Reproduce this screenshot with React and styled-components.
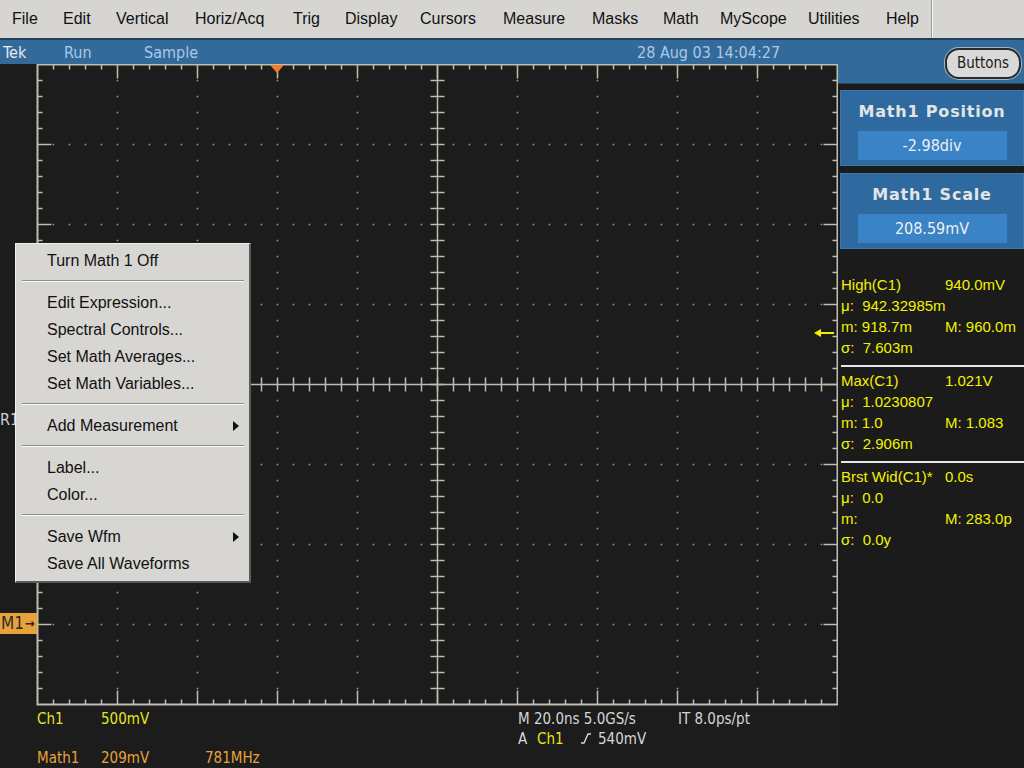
import React from 'react'
import styled, { createGlobalStyle } from 'styled-components'

const GlobalStyle = createGlobalStyle`
    html, body {
        margin: 0;
        padding: 0;
        background: #1c1c1c;
    }
`

const scopeFont = `"DejaVu Sans Condensed", "Liberation Sans Narrow", "DejaVu Sans", sans-serif`
const winFont = `"Liberation Sans", Arial, sans-serif`

const MENU = [
    ['File', 63], ['Edit', 53], ['Vertical', 79], ['Horiz/Acq', 98], ['Trig', 52],
    ['Display', 75], ['Cursors', 83], ['Measure', 89], ['Masks', 71], ['Math', 57],
    ['MyScope', 88], ['Utilities', 78], ['Help', 45],
]

const POPUP = [
    [{ text: 'Turn Math 1 Off' }],
    [{ text: 'Edit Expression...' }, { text: 'Spectral Controls...' }, { text: 'Set Math Averages...' }, { text: 'Set Math Variables...' }],
    [{ text: 'Add Measurement', sub: true }],
    [{ text: 'Label...' }, { text: 'Color...' }],
    [{ text: 'Save Wfm', sub: true }, { text: 'Save All Waveforms' }],
]

const MEASUREMENTS = [
    { name: 'High(C1)', value: '940.0mV', mean: '942.32985m', min: '918.7m', max: '960.0m', sd: '7.603m' },
    { name: 'Max(C1)', value: '1.021V', mean: '1.0230807', min: '1.0', max: '1.083', sd: '2.906m' },
    { name: 'Brst Wid(C1)*', value: '0.0s', mean: '0.0', min: '', max: '283.0p', sd: '0.0y' },
]

function Graticule() {
    const x0 = 37.5
    const y0 = 0.5
    const els = []
    const c = '#bdbdb0'
    // dots on major lines
    for (let i = 1; i < 10; i++) {
        if (i === 5) continue
        for (let j = 1; j < 40; j++) {
            els.push(<rect key={`dv${i}-${j}`} x={x0 + i * 80 - 0.75} y={y0 + j * 16 - 0.75} width="1.5" height="1.5" fill="#9d9d94" />)
        }
    }
    for (let k = 1; k < 8; k++) {
        if (k === 4) continue
        for (let j = 1; j < 50; j++) {
            if (j % 5 === 0) continue
            els.push(<rect key={`dh${k}-${j}`} x={x0 + j * 16 - 0.75} y={y0 + k * 80 - 0.75} width="1.5" height="1.5" fill="#9d9d94" />)
        }
    }
    // edge ticks
    for (let j = 1; j < 50; j++) {
        const x = x0 + j * 16
        const l = j % 5 === 0 ? 14 : 5
        els.push(<line key={`tt${j}`} x1={x} y1={y0} x2={x} y2={y0 + l} stroke={c} strokeWidth="1.5" />)
        els.push(<line key={`tb${j}`} x1={x} y1={y0 + 640} x2={x} y2={y0 + 640 - l} stroke={c} strokeWidth="1.5" />)
        els.push(<line key={`tc${j}`} x1={x} y1={y0 + 313} x2={x} y2={y0 + 327} stroke={c} strokeWidth="1.5" />)
    }
    for (let j = 1; j < 40; j++) {
        const y = y0 + j * 16
        const l = j % 5 === 0 ? 14 : 5
        els.push(<line key={`tl${j}`} x1={x0} y1={y} x2={x0 + l} y2={y} stroke={c} strokeWidth="1.5" />)
        els.push(<line key={`tr${j}`} x1={x0 + 800} y1={y} x2={x0 + 800 - l} y2={y} stroke={c} strokeWidth="1.5" />)
        els.push(<line key={`tm${j}`} x1={x0 + 393} y1={y} x2={x0 + 407} y2={y} stroke={c} strokeWidth="1.5" />)
    }
    return (
        <svg width="838" height="642" viewBox="0 0 838 642">
            {els}
            <line x1={x0 + 400} y1={y0} x2={x0 + 400} y2={y0 + 640} stroke={c} strokeWidth="1.5" />
            <line x1={x0} y1={y0 + 320} x2={x0 + 800} y2={y0 + 320} stroke={c} strokeWidth="1.5" />
            <rect x={x0} y={y0} width="800" height="640" fill="none" stroke={c} strokeWidth="2" />
            <polygon points="270,1 284,1 277,9" fill="#f27a2a" />
            <line x1="817" y1="269" x2="834" y2="269" stroke="#f2f200" strokeWidth="2" />
            <polygon points="814,269 821,265 821,273" fill="#f2f200" />
        </svg>
    )
}

export default function App() {
    return (
        <Screen>
            <GlobalStyle />
            <MenuBar>
                {MENU.map(([t, w], i) => (
                    <MenuItem key={t} w={w} first={i === 0}>{t}</MenuItem>
                ))}
                <MenuDivider />
            </MenuBar>
            <Body>
                <LeftCol>
                    <StatusBar>
                        <StatusText w={61} bright>Tek</StatusText>
                        <StatusText w={80}>Run</StatusText>
                        <StatusText w={493}>Sample</StatusText>
                        <StatusText>28 Aug 03 14:04:27</StatusText>
                    </StatusBar>
                    <ScopeArea>
                        <Graticule />
                        <RefLabel>R1</RefLabel>
                        <MathMarker>M1<MarkerArrow>→</MarkerArrow></MathMarker>
                        <PopupMenu>
                            {POPUP.map((group, gi) => (
                                <React.Fragment key={gi}>
                                    {gi > 0 && <PopupSeparator />}
                                    {group.map(item => (
                                        <PopupItem key={item.text}>
                                            {item.text}
                                            {item.sub && <SubArrow />}
                                        </PopupItem>
                                    ))}
                                </React.Fragment>
                            ))}
                        </PopupMenu>
                    </ScopeArea>
                    <Readouts>
                        <ReadoutBlock w={481}>
                            <ReadoutRow gap={21}>
                                <Cell w={64} color="#e4e41c">Ch1</Cell>
                                <Cell color="#e4e41c">500mV</Cell>
                            </ReadoutRow>
                            <ReadoutRow>
                                <Cell w={64} color="#e3a43a">Math1</Cell>
                                <Cell w={104} color="#e3a43a">209mV</Cell>
                                <Cell color="#e3a43a">781MHz</Cell>
                            </ReadoutRow>
                        </ReadoutBlock>
                        <ReadoutBlock>
                            <ReadoutRow gap={2}>
                                <Cell w={160}>M 20.0ns 5.0GS/s</Cell>
                                <Cell>IT 8.0ps/pt</Cell>
                            </ReadoutRow>
                            <ReadoutRow>
                                <Cell w={19}>A</Cell>
                                <Cell w={43} color="#e4e41c">Ch1</Cell>
                                <Cell w={18}>
                                    <svg width="12" height="12" viewBox="0 0 12 12">
                                        <path d="M1 11 L4 11 L8 2 L11 2" fill="none" stroke="#d8d8d8" strokeWidth="1.4" />
                                    </svg>
                                </Cell>
                                <Cell>540mV</Cell>
                            </ReadoutRow>
                        </ReadoutBlock>
                    </Readouts>
                </LeftCol>
                <RightCol>
                    <PanelTop>
                        <PillButton>Buttons</PillButton>
                    </PanelTop>
                    <ControlBoxes>
                        <ControlBox>
                            <ControlTitle>Math1 Position</ControlTitle>
                            <ControlValue>-2.98div</ControlValue>
                        </ControlBox>
                        <ControlBox>
                            <ControlTitle>Math1 Scale</ControlTitle>
                            <ControlValue>208.59mV</ControlValue>
                        </ControlBox>
                    </ControlBoxes>
                    <Measurements>
                        {MEASUREMENTS.map((m, i) => (
                            <MeasGroup key={m.name} first={i === 0}>
                                <MeasRow><span>{m.name}</span><span>{m.value}</span></MeasRow>
                                <MeasRow><Wide>μ:&nbsp; {m.mean}</Wide></MeasRow>
                                <MeasRow><span>m: {m.min}</span><span>M: {m.max}</span></MeasRow>
                                <MeasRow><span>σ:&nbsp; {m.sd}</span></MeasRow>
                            </MeasGroup>
                        ))}
                    </Measurements>
                </RightCol>
            </Body>
        </Screen>
    )
}

const Screen = styled.div`
    width: 1024px;
    height: 768px;
    overflow: hidden;
    display: flex;
    flex-direction: column;
    background: #1c1c1c;
`

const MenuBar = styled.div`
    height: 38px;
    background: #d6d5d2;
    border-bottom: 2px solid #1f3f5f;
    display: flex;
    align-items: center;
    font-family: ${winFont};
    font-size: 16px;
    color: #111;
`

const MenuItem = styled.div`
    width: ${props => props.w}px;
    padding-left: ${props => props.first ? 12 : 0}px;
    box-sizing: border-box;
    flex: none;
`

const MenuDivider = styled.div`
    align-self: stretch;
    width: 1px;
    background: #9c9c9c;
    border-right: 1px solid #f4f4f4;
`

const Body = styled.div`
    flex: 1;
    display: flex;
`

const LeftCol = styled.div`
    width: 838px;
    display: flex;
    flex-direction: column;
`

const StatusBar = styled.div`
    height: 24px;
    background: #336a99;
    display: flex;
    align-items: center;
    padding-left: 3px;
    font-family: ${scopeFont};
    font-size: 16px;
`

const StatusText = styled.div`
    width: ${props => props.w ? `${props.w}px` : 'auto'};
    flex: none;
    color: ${props => props.bright ? '#e4ecf4' : '#a9c9e9'};
`

const ScopeArea = styled.div`
    position: relative;
    height: 642px;
    svg { display: block; }
`

const RefLabel = styled.div`
    position: absolute;
    left: 0;
    top: 346px;
    font-family: ${scopeFont};
    font-size: 16px;
    color: #d0d0d0;
`

const MathMarker = styled.div`
    position: absolute;
    left: 0;
    top: 549px;
    width: 37px;
    height: 21px;
    background: #e7a33a;
    color: #2a2a2a;
    font-family: ${scopeFont};
    font-size: 17px;
    line-height: 21px;
    display: flex;
    align-items: center;
    padding-left: 1px;
    box-sizing: border-box;
    overflow: hidden;
`

const MarkerArrow = styled.span`
    font-size: 13px;
    margin-left: 1px;
    font-weight: bold;
`

const PopupMenu = styled.div`
    position: absolute;
    left: 15px;
    top: 179px;
    width: 236px;
    box-sizing: border-box;
    padding: 3px 0 4px;
    background: #d7d6d3;
    border-top: 1px solid #f0f0f0;
    border-left: 1px solid #f0f0f0;
    border-right: 2px solid #5a5a5a;
    border-bottom: 2px solid #5a5a5a;
    font-family: ${winFont};
    font-size: 16px;
    color: #111;
`

const PopupItem = styled.div`
    position: relative;
    height: 27px;
    line-height: 27px;
    padding-left: 31px;
`

const SubArrow = styled.span`
    position: absolute;
    right: 10px;
    top: 9px;
    border-left: 6px solid #111;
    border-top: 5px solid transparent;
    border-bottom: 5px solid transparent;
`

const PopupSeparator = styled.div`
    height: 0;
    margin: 6px 5px 7px 6px;
    border-top: 1px solid #8c8c8c;
    border-bottom: 1px solid #fafafa;
`

const Readouts = styled.div`
    flex: 1;
    display: flex;
    padding: 4px 0 0 37px;
    font-family: ${scopeFont};
    font-size: 15px;
    line-height: 18px;
`

const ReadoutBlock = styled.div`
    width: ${props => props.w ? `${props.w}px` : 'auto'};
    display: flex;
    flex-direction: column;
`

const ReadoutRow = styled.div`
    display: flex;
    align-items: center;
    height: 18px;
    margin-bottom: ${props => props.gap || 0}px;
`

const Cell = styled.div`
    width: ${props => props.w ? `${props.w}px` : 'auto'};
    flex: none;
    color: ${props => props.color || '#d6d6d6'};
    white-space: nowrap;
`

const RightCol = styled.div`
    flex: 1;
    display: flex;
    flex-direction: column;
    background: #1b1b1b;
`

const PanelTop = styled.div`
    height: 43px;
    background: #336a99;
    border-bottom: 1px solid #22486b;
    display: flex;
    align-items: center;
    justify-content: flex-end;
    padding-right: 3px;
`

const PillButton = styled.div`
    width: 72px;
    height: 27px;
    margin-top: 3px;
    border-radius: 14px;
    background: #d9d9d9;
    border: 2px solid #2b2b2b;
    box-shadow: 0 0 0 1px #9fb6cc;
    display: flex;
    align-items: center;
    justify-content: center;
    font-family: ${scopeFont};
    font-size: 15px;
    color: #1a1a1a;
`

const ControlBoxes = styled.div`
    display: flex;
    flex-direction: column;
    gap: 7px;
    padding: 6px 0 0 2px;
`

const ControlBox = styled.div`
    height: 76px;
    box-sizing: border-box;
    background: #2e6aa0;
    border: 1px solid #3d78ad;
    display: flex;
    flex-direction: column;
    align-items: center;
`

const ControlTitle = styled.div`
    margin-top: 11px;
    height: 20px;
    line-height: 20px;
    font-family: "DejaVu Sans", sans-serif;
    font-weight: bold;
    font-size: 16px;
    letter-spacing: 0.8px;
    color: #e4e4e4;
`

const ControlValue = styled.div`
    margin-top: 9px;
    width: 149px;
    height: 29px;
    background: #3a83c6;
    display: flex;
    align-items: center;
    justify-content: center;
    font-family: ${scopeFont};
    font-size: 16px;
    color: #f0f0f0;
`

const Measurements = styled.div`
    padding: 25px 0 0 3px;
    font-family: ${winFont};
    font-size: 15px;
    color: #f2f200;
`

const MeasGroup = styled.div`
    padding: ${props => props.first ? '0' : '3px'} 0 7px;
    border-bottom: 2px solid #e8e8e8;
    &:last-child {
        border-bottom: none;
    }
`

const MeasRow = styled.div`
    display: grid;
    grid-template-columns: 104px 1fr;
    height: 21px;
    line-height: 21px;
    white-space: nowrap;
`

const Wide = styled.span`
    grid-column: 1 / span 2;
`
